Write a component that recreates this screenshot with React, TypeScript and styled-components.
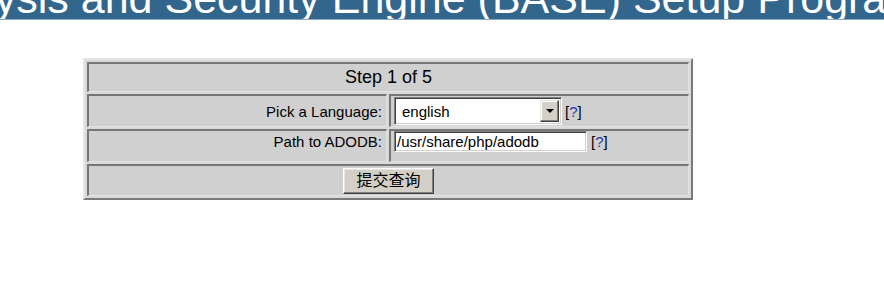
import styled, { createGlobalStyle } from 'styled-components';
import React from 'react';

const GlobalStyle = createGlobalStyle`
    body {
        margin: 0;
        background: #ffffff;
        font-family: "Liberation Sans", Arial, sans-serif;
        color: #000000;
    }
`;

/////////////////////

const Banner = styled.div`
    height: 19px;
    background: #33668c;
    border-bottom: 1px solid #8aa9c6;
    overflow: hidden;
`;
const Title = styled.h1`
    margin: -23px 0 0 -206px;
    font-size: 43px;
    line-height: 43px;
    font-weight: normal;
    color: #ffffff;
    white-space: nowrap;
`;

const SetupTable = styled.table`
    margin: 38px 0 0 83px;
    width: 610px;
    table-layout: fixed;
    border-collapse: separate;
    border-spacing: 2px;
    background: #d9d9d9;
    border: 2px solid;
    border-color: #e6e6e6 #7a7a7a #7a7a7a #e6e6e6;
`;
const Row = styled.tr<{ $align?: string }>`
    vertical-align: ${p => p.$align || 'middle'};
`;
const Cell = styled.td<{ $h: number, $text?: string, $size?: number }>`
    box-sizing: border-box;
    height: ${p => p.$h}px;
    padding: 0 4px;
    background: #d0d0d0;
    border-style: solid;
    border-width: 2px 1px 1px 2px;
    border-color: #777777 #e2e2e2 #e2e2e2 #777777;
    text-align: ${p => p.$text || 'left'};
    font-size: ${p => p.$size || 15}px;
    white-space: nowrap;
`;

const SelectBox = styled.div`
    display: inline-flex;
    align-items: center;
    justify-content: space-between;
    box-sizing: border-box;
    width: 168px;
    height: 28px;
    margin-left: -1px;
    padding: 2px 2px 2px 7px;
    background: #ffffff;
    border: 1px solid;
    border-color: #808080 #ffffff #ffffff #808080;
    box-shadow: inset 1px 1px 0 #404040, inset -1px -1px 0 #d4d0c8;
    font-size: 15px;
    vertical-align: middle;
`;
const ArrowButton = styled.span`
    display: flex;
    align-items: center;
    justify-content: center;
    box-sizing: border-box;
    width: 19px;
    height: 22px;
    background: #d4d0c8;
    border: 1px solid;
    border-color: #e8e6e2 #404040 #404040 #e8e6e2;
    box-shadow: inset -1px -1px 0 #808080, inset 1px 1px 0 #ffffff;

    &::after {
        content: '';
        border-left: 4px solid transparent;
        border-right: 4px solid transparent;
        border-top: 4px solid #000000;
    }
`;
const TextInput = styled.input`
    box-sizing: border-box;
    width: 193px;
    height: 21px;
    margin: 0 0 0 -1px;
    padding: 0 2px;
    background: #ffffff;
    border: 1px solid;
    border-color: #808080 #ffffff #ffffff #808080;
    box-shadow: inset 1px 1px 0 #404040, inset -1px -1px 0 #d4d0c8;
    font-family: "Liberation Sans", Arial, sans-serif;
    font-size: 15px;
    color: #000000;
    outline: none;
`;
const Help = styled.span<{ $gap: number, $valign: string }>`
    margin-left: ${p => p.$gap}px;
    font-size: 15px;
    vertical-align: ${p => p.$valign};
`;
const HelpLink = styled.a`
    color: #2638b0;
    text-decoration: none;
`;
const SubmitButton = styled.button`
    box-sizing: border-box;
    width: 91px;
    height: 26px;
    padding: 0;
    background: #d4d0c8;
    border: 1px solid;
    border-color: #ffffff #404040 #404040 #ffffff;
    box-shadow: inset -1px -1px 0 #808080, inset 1px 1px 0 #e8e6e2;
    font-family: "Liberation Sans", "Noto Sans CJK SC", sans-serif;
    font-size: 16px;
    line-height: 1;
    color: #000000;
    vertical-align: middle;
`;

const HelpMark: React.FC<{ gap: number, valign: string }> = ({ gap, valign }) => (
    <Help $gap={gap} $valign={valign}>[<HelpLink href="#">?</HelpLink>]</Help>
);

const App: React.FC = () => {
    return (
        <>
            <GlobalStyle />
            <Banner>
                <Title>Basic Analysis and Security Engine (BASE) Setup Program</Title>
            </Banner>
            <SetupTable>
                <tbody>
                    <Row>
                        <Cell $h={30} $text="center" $size={18} colSpan={2}>Step 1 of 5</Cell>
                    </Row>
                    <Row>
                        <Cell $h={33} $text="right">Pick a Language:</Cell>
                        <Cell $h={33}>
                            <SelectBox>
                                <span>english</span>
                                <ArrowButton />
                            </SelectBox>
                            <HelpMark gap={3} valign="middle" />
                        </Cell>
                    </Row>
                    <Row $align="baseline">
                        <Cell $h={33} $text="right">Path to ADODB:</Cell>
                        <Cell $h={33}>
                            <TextInput type="text" defaultValue="/usr/share/php/adodb" />
                            <HelpMark gap={4} valign="baseline" />
                        </Cell>
                    </Row>
                    <Row>
                        <Cell $h={32} $text="center" colSpan={2}>
                            <SubmitButton>提交查询</SubmitButton>
                        </Cell>
                    </Row>
                </tbody>
            </SetupTable>
        </>
    );
};

export default App;
